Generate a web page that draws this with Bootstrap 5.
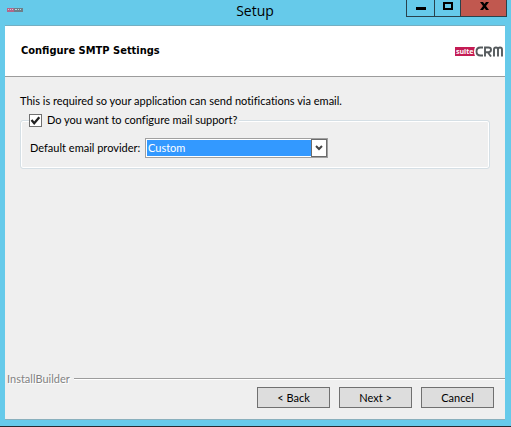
<!DOCTYPE html>
<html lang="en">
<head>
<meta charset="utf-8">
<meta name="viewport" content="width=device-width, initial-scale=1">
<title>Setup</title>
<link href="https://cdn.jsdelivr.net/npm/bootstrap@5.3.0/dist/css/bootstrap.min.css" rel="stylesheet">
<style>
body{background:#66caea;color:#000;font:11px/14px Lato,"Noto Sans",sans-serif;font-variant-ligatures:none;border-bottom:1px solid #272b30}
.titlebar{height:25px;padding:0 4px 0 7px}
.title-text{font:14px/21px "Open Sans",sans-serif;padding-right:4px}
.side{flex:1 1 0}
.win-btn{height:17px;width:29px;padding:0;border:1px solid #29424c;border-top:0;background:transparent;display:flex;justify-content:center}
.win-btn+.win-btn{border-left:0}
.win-btn+.win-btn{width:26px}
.win-btn+.win-close{width:46px;background:#c1584f}
.client{margin:0 6px 6px 5px;background:#efefef;border-top:1px solid #74afc2;border-bottom:1px solid #8ab0bd}
.banner{height:51px;background:#fff;border-bottom:1px solid #9c9c9c;padding:0 2px 0 16px}
.banner h1{font:700 11px/14px "DejaVu Sans Condensed","DejaVu Sans",sans-serif}
.content{padding:17px 15px 0}
.group{border:1px solid #d5dfe5;border-radius:3px;box-shadow:inset 0 0 0 1px #fff;padding:11px 9px 10px;margin-top:5px}
.group legend{font-size:11px;line-height:14px;background:#efefef;padding:0 2px 0 0;margin:0 0 0 -1px}
.tick{appearance:none;width:13px;height:13px;margin:0 5px 0 0;border:1px solid #707070;border-radius:0;background:#fff}
.tick:checked{background:#fff url("data:image/svg+xml,%3Csvg xmlns='http://www.w3.org/2000/svg' viewBox='0 0 11 11'%3E%3Cpath d='M1.5 5L4.2 8.2L9.3 2.2' fill='none' stroke='%23222' stroke-width='2.3'/%3E%3C/svg%3E") center/11px no-repeat}
.provider-label{width:115px}
.provider{width:183px;height:20px;border:1px solid #a0a0a0;background:#fff;padding:1px}
.provider select{appearance:none;border:0;border-radius:0;outline:0;background:#3399ff;color:#fff;padding:0 0 0 1px;font:inherit;width:calc(100% - 15px);height:16px}
.drop{top:0;right:0;bottom:0;width:16px;border:1px solid #6b6b6b;background:#fff;pointer-events:none}
.brand-line{color:#838383;text-shadow:1px 1px #fff;padding-left:2px}
.rule{height:2px;background:#fff;border-top:1px solid #9c9c9c}
.footer-btns{gap:9px;padding:1px 11px 11px}
.wiz{width:73px;height:21px;padding:0;border:1px solid #707070;border-radius:0;background:#ddd;color:#000;font-size:11px;line-height:19px}
.wiz:hover{background:#e5f1fb;border-color:#3c7fb1;color:#000}
</style>
<script src="https://cdn.jsdelivr.net/npm/bootstrap@5.3.0/dist/js/bootstrap.bundle.min.js"></script>
</head>
<body class="d-flex flex-column min-vh-100">
<header class="titlebar d-flex align-items-start">
  <div class="side">
    <svg class="d-block mt-2" width="16" height="4" viewBox="0 0 16 4" aria-hidden="true"><path fill="#b1688b" d="M0 0h7v4H0z"/><path fill="#6d7f8a" d="M7 0h9v4H7z"/><path stroke="#ddc0d0" d="M1 1.500h1m1 0h1m1 0h1"/><path stroke="#c3d5db" d="M8 1.500h2m1 0h1m1 0h1"/></svg>
  </div>
  <div class="title-text">Setup</div>
  <div class="side d-flex justify-content-end">
    <button class="win-btn" aria-label="Minimize"><svg width="26" height="16"><path d="M8 7h10v3H8z"/></svg></button>
    <button class="win-btn" aria-label="Maximize"><svg width="26" height="16"><path fill-rule="evenodd" d="M8 2h10v8H8zM10 4v4h6V4z"/></svg></button>
    <button class="win-btn win-close" aria-label="Close"><svg width="44" height="16"><path d="M18 2h3l1.500 2 1.500-2h3l-3 4 3 4h-3l-1.500-2-1.500 2h-3l3-4z"/></svg></button>
  </div>
</header>
<main class="client d-flex flex-column flex-grow-1">
  <div class="banner d-flex align-items-center justify-content-between">
    <h1 class="m-0">Configure SMTP Settings</h1>
    <svg width="48" height="12" viewBox="0 0 48 12" role="img" aria-label="suiteCRM"><path fill="#c41c54" d="M0 2h20q-2 4.500 0 9H0z"/><text x="1" y="9" font-family="Open Sans" font-size="7" font-weight="700" fill="#fff">suite</text><g fill="none" stroke="#555a5d" stroke-width="1.900"><path d="M28 2.500H25.500Q21.500 2.500 21.500 6.500T25.500 10.500H28M30 11.500V2.500h3.500q2.500 0 2.500 2.300T33.500 7.200H30M33 7.500l3 4M39 11.500V4.500q0-2 2-2t2 2v7M43 4.500q0-2 2-2t2 2v7"/></g></svg>
  </div>
  <div class="content flex-grow-1">
    <p class="mb-0">This is required so your application can send notifications via email.</p>
    <fieldset class="group">
      <legend class="float-none w-auto d-flex align-items-center"><input class="tick" type="checkbox" id="mail" checked><label for="mail">Do you want to configure mail support?</label></legend>
      <div class="d-flex align-items-center">
        <label class="provider-label" for="prov">Default email provider:</label>
        <div class="provider position-relative">
          <select class="d-block" id="prov"><option>Custom</option></select>
          <span class="drop position-absolute d-flex align-items-center justify-content-center"><svg width="8" height="8" viewBox="0 0 8 8"><path d="M1 2l3 3 3-3" fill="none" stroke="#444" stroke-width="2"/></svg></span>
        </div>
      </div>
    </fieldset>
  </div>
  <footer>
    <div class="d-flex align-items-center brand-line"><span class="me-1">InstallBuilder</span><div class="rule flex-grow-1"></div></div>
    <div class="footer-btns d-flex justify-content-end">
      <button class="btn wiz">&lt; Back</button><button class="btn wiz">Next &gt;</button><button class="btn wiz">Cancel</button>
    </div>
  </footer>
</main>
</body>
</html>
